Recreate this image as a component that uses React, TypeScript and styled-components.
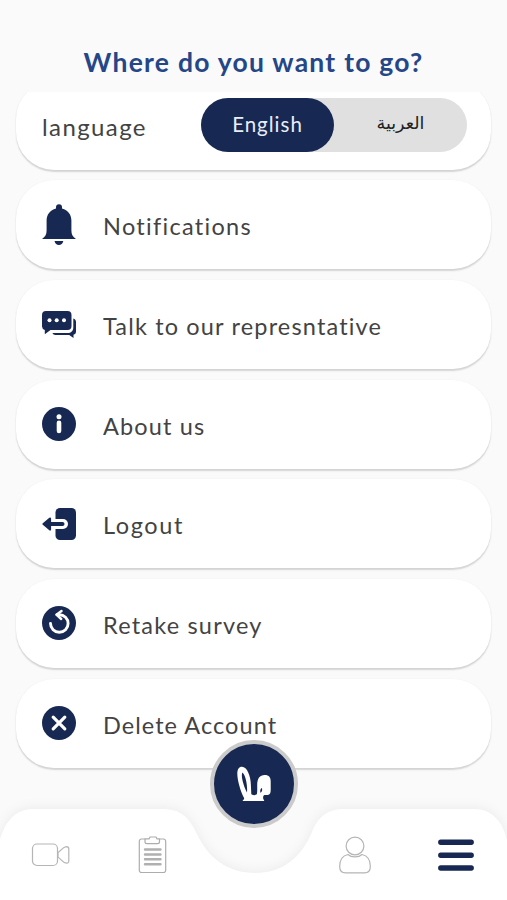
import React from "react";
import styled, { createGlobalStyle } from "styled-components";

const navy = "#172853";

const GlobalStyle = createGlobalStyle`
  * { box-sizing: border-box; }
  body { margin: 0; background: #fafafa; }
  button { border: 0; padding: 0; background: none; font: inherit; color: inherit; }
`;

const Screen = styled.main`
  display: flex;
  flex-direction: column;
  width: 507px;
  height: 900px;
  overflow: hidden;
  background: #fafafa;
  color: #434343;
  font-family: Lato, "DejaVu Sans", sans-serif;
`;

const Header = styled.header`
  height: 92px;
  flex: none;
  padding-top: 44px;
  text-align: center;
`;

const Title = styled.h1`
  margin: 0;
  font-size: 26.5px;
  line-height: 36px;
  font-weight: 700;
  letter-spacing: 1.25px;
  color: #254687;
`;

const ScrollArea = styled.div`
  flex: 1;
  min-height: 0;
  overflow: hidden;
`;

const List = styled.div`
  display: flex;
  flex-direction: column;
  gap: 10.7px;
  margin-top: -11.5px;
  padding: 0 16px;
`;

const Card = styled.div`
  display: flex;
  align-items: center;
  height: 89px;
  flex: none;
  padding: 3px 24px 0 26px;
  border-radius: 38px;
  background: #fff;
  box-shadow: 0 1.5px 1.5px rgba(0, 0, 0, 0.15), 0 0 3px rgba(0, 0, 0, 0.025);
`;

const IconSlot = styled.span`
  display: flex;
  width: 61px;
  height: 42px;
  align-items: center;
  margin-top: -3px;
`;

const Label = styled.span<{ $spacing: number; $size?: number }>`
  font-size: ${(p) => p.$size ?? 23.5}px;
  line-height: 30px;
  letter-spacing: ${(p) => p.$spacing}px;
  white-space: nowrap;
`;

const Switch = styled.div`
  display: flex;
  width: 266px;
  height: 54px;
  margin-left: auto;
  margin-top: -4px;
  border-radius: 27px;
  background: #e0e0e0;
`;

const Option = styled.button<{ $active?: boolean }>`
  width: 133px;
  height: 54px;
  padding-bottom: ${(p) => (p.$active ? 1 : 4)}px;
  border-radius: 27px;
  font-size: ${(p) => (p.$active ? 20.5 : 17.5)}px;
  letter-spacing: ${(p) => (p.$active ? 1 : 0)}px;
  background: ${(p) => (p.$active ? navy : "transparent")};
  color: ${(p) => (p.$active ? "#e9eef8" : "#222")};
`;

const NavBar = styled.nav`
  position: relative;
  display: grid;
  grid-template-columns: 102px 102px 100px 101px 102px;
  align-items: center;
  justify-items: center;
  height: 91px;
  flex: none;
`;

const NavShape = styled.svg`
  position: absolute;
  left: 0;
  top: 0;
  overflow: visible;
  filter: drop-shadow(0 -1px 6px rgba(0, 0, 0, 0.06));
`;

const NavButton = styled.button`
  position: relative;
  display: flex;
`;

const HomeButton = styled.button`
  position: absolute;
  left: 210px;
  top: -69px;
  width: 88px;
  height: 88px;
  border: 4px solid #cbcbcb;
  border-radius: 50%;
  background: ${navy};
  display: flex;
  align-items: center;
  justify-content: center;
`;

const Bell = () => (
  <svg width="34" height="42" viewBox="0 0 34 42" fill={navy}>
    <path d="M14 3.2a3 3 0 0 1 6 0v1.2c6 1.5 9.4 6.2 9.4 12.2v10c0 4 1.4 6.400 4.600 8.400H0c3.200-2 4.600-4.400 4.600-8.400v-10C4.600 10.600 8 5.900 14 4.400Z" />
    <path d="M12.500 37h8.800c-.6 2.600-2.200 4-4.400 4s-3.800-1.400-4.400-4Z" />
  </svg>
);

const Chat = () => (
  <svg width="34" height="28" viewBox="0 0 34 28" fill={navy}>
    <path d="M4 1h21.500a4 4 0 0 1 4 4v11a4 4 0 0 1-4 4H8.500l-5.700 4.200V20A4 4 0 0 1 0 16V5a4 4 0 0 1 4-4Z" />
    <path d="M31.300 8.500c1.700.6 2.700 1.700 2.700 3.500v9.500c0 1.800-1 2.900-2.500 3.200v3.300L27.200 25H13.500c-1.500 0-2.500-.7-3.100-1.900h15.200c3.500 0 5.700-2.100 5.700-5.600Z" />
    <g fill="#fff"><circle cx="7.500" cy="10.300" r="2" /><circle cx="14.700" cy="10.300" r="2" /><circle cx="22" cy="10.300" r="2" /></g>
  </svg>
);

const Info = () => (
  <svg width="34" height="34" viewBox="0 0 34 34">
    <circle cx="17" cy="17" r="17" fill={navy} />
    <circle cx="17" cy="9.800" r="2.500" fill="#fff" />
    <path d="M17 15.700v8.300" stroke="#fff" strokeWidth="4.600" strokeLinecap="round" />
  </svg>
);

const Exit = () => (
  <svg width="34" height="34" viewBox="0 0 34 34">
    <rect x="13.500" y="1" width="20.500" height="32" rx="4.500" fill={navy} />
    <path d="M11 12h10a5 5 0 0 1 0 10H11" fill="#fff" />
    <path d="M20.500 17H5" fill="none" stroke={navy} strokeWidth="4" strokeLinecap="round" />
    <path d="m8 11.500-6.500 5.500L8 22.500v-11Z" fill={navy} stroke={navy} strokeWidth="2.200" strokeLinejoin="round" />
  </svg>
);

const Retake = () => (
  <svg width="34" height="34" viewBox="0 0 34 34">
    <circle cx="17" cy="17" r="17" fill={navy} />
    <path d="M8.500 17.500a8.800 8.800 0 1 0 8.800-8.800H15" fill="none" stroke="#fff" strokeWidth="2.900" strokeLinecap="round" />
    <path d="m19.500 5-5 3.700 4.700 4.300" fill="none" stroke="#fff" strokeWidth="2.500" strokeLinecap="round" strokeLinejoin="round" />
  </svg>
);

const Cross = () => (
  <svg width="34" height="34" viewBox="0 0 34 34">
    <circle cx="17" cy="17" r="17" fill={navy} />
    <path d="m11.200 11.200 11.600 11.600m0-11.600-11.600 11.600" stroke="#fff" strokeWidth="3.200" strokeLinecap="round" />
  </svg>
);

const Camera = () => (
  <svg width="40" height="26" viewBox="0 0 40 26" fill="none" stroke="#b5b5b5" strokeWidth="1.200">
    <rect x="1.500" y="2" width="25" height="21.500" rx="4.500" />
    <path d="M27 10.500c3-1.300 4.300-5.500 8.500-5.800 1.600 0 2.300.8 2.300 2.200v12c0 1.500-.8 2.300-2.300 2.200-4.200-.3-5.500-4.500-8.500-5.800Z" />
  </svg>
);

const Clipboard = () => (
  <svg width="30" height="38" viewBox="0 0 30 38" fill="none" stroke="#adadad" strokeWidth="1.200">
    <path d="M7.500 3H3.500a2.200 2.200 0 0 0-2.200 2.200v29A2.200 2.200 0 0 0 3.500 36.500h22a2.200 2.200 0 0 0 2.200-2.300v-29A2.200 2.200 0 0 0 25.500 3H22" />
    <path d="M8 2.800h3L12 1h6l1 1.800h2.500v3c0 1.200-.7 1.900-1.900 1.900H8.900C7.700 7.700 7 7 7 5.800V3Z" />
    <g strokeWidth="2.400" stroke="#b0b0b0" strokeLinecap="round"><path d="M7 13.500h15.500M7 18.500h15.500M7 23.300h15.500M7 28.200h15.500" /></g>
  </svg>
);

const Person = () => (
  <svg width="34" height="38" viewBox="0 0 34 38" fill="none" stroke="#b5b5b5" strokeWidth="1.200">
    <circle cx="17" cy="10" r="8.900" />
    <path d="M10 18.500C4.500 19.700 1.700 24.500 1.700 30.500c0 4.300 1.500 6.400 5.800 6.400h19c4.300 0 5.800-2.100 5.800-6.400 0-6-2.800-10.800-8.300-12-1.500 1.500-3.900 2.400-7 2.400s-5.500-.9-7-2.400Z" />
  </svg>
);

const Menu = () => (
  <svg width="36" height="34" viewBox="0 0 36 34" stroke={navy} strokeWidth="5.400" strokeLinecap="round">
    <path d="M2.800 4.300h30.400M2.800 17.200h30.400M2.800 30h30.400" />
  </svg>
);

const Ears = () => (
  <svg width="36" height="36" viewBox="0 0 36 36">
    <path d="M6.500 35c.2-1 1.700-1.200 1.700-2.800C4.500 25.500 1.300 14 1.300 7.500 1.300 3.500 3 .8 6 .8c5 0 8.700 9 8.900 18.200l.4 9c.7 1.500 4.800 1.500 5.600 0 .5-2.500.3-5 .3-9 0-6.500 2.500-10 7.500-10 4.500 0 6 2.500 6 6.500V24c0 3-.7 4.800-3 5h-3c-1.500.3-1.800 2-1.500 3.500.2 1.200 1 1.500 1 2.500Z" fill="#fff" />
    <path d="M6.500 6.500C4.400 9.500 7.700 20 11 26.500 11.700 19.500 9.700 9.500 6.500 6.500ZM25.700 22c-1.500 1-1.700 3-1.300 4.700 1.700-1 2.300-3 1.300-4.700Z" fill={navy} />
  </svg>
);

const items = [
  { label: "Notifications", icon: Bell, spacing: 1.3 },
  { label: "Talk to our represntative", icon: Chat, spacing: 1.16 },
  { label: "About us", icon: Info, spacing: 1.15 },
  { label: "Logout", icon: Exit, spacing: 1.6 },
  { label: "Retake survey", icon: Retake, spacing: 1.2 },
  { label: "Delete Account", icon: Cross, spacing: 1.05 },
];

export default function App() {
  return (
    <Screen>
      <GlobalStyle />
      <Header>
        <Title>Where do you want to go?</Title>
      </Header>
      <ScrollArea>
        <List>
          <Card>
            <Label $spacing={1.4} $size={24}>language</Label>
            <Switch>
              <Option $active>English</Option>
              <Option lang="ar" dir="rtl">العربية</Option>
            </Switch>
          </Card>
          {items.map(({ label, icon: Icon, spacing }) => (
            <Card key={label}>
              <IconSlot><Icon /></IconSlot>
              <Label $spacing={spacing}>{label}</Label>
            </Card>
          ))}
        </List>
      </ScrollArea>
      <NavBar>
        <NavShape width="507" height="91" viewBox="0 0 507 91">
          <path d="M0 31C5 13 15 0 34 0H161C181 0 189 8 197 25C208 49 228 64 255 64S301 49 312 23C318 8 327 0 345 0H474C492 0 503 13 507 31V91H0Z" fill="#fff" />
        </NavShape>
        <NavButton aria-label="Videos"><Camera /></NavButton>
        <NavButton aria-label="Plans"><Clipboard /></NavButton>
        <span />
        <NavButton aria-label="Profile"><Person /></NavButton>
        <NavButton aria-label="Menu"><Menu /></NavButton>
        <HomeButton aria-label="Home"><Ears /></HomeButton>
      </NavBar>
    </Screen>
  );
}
